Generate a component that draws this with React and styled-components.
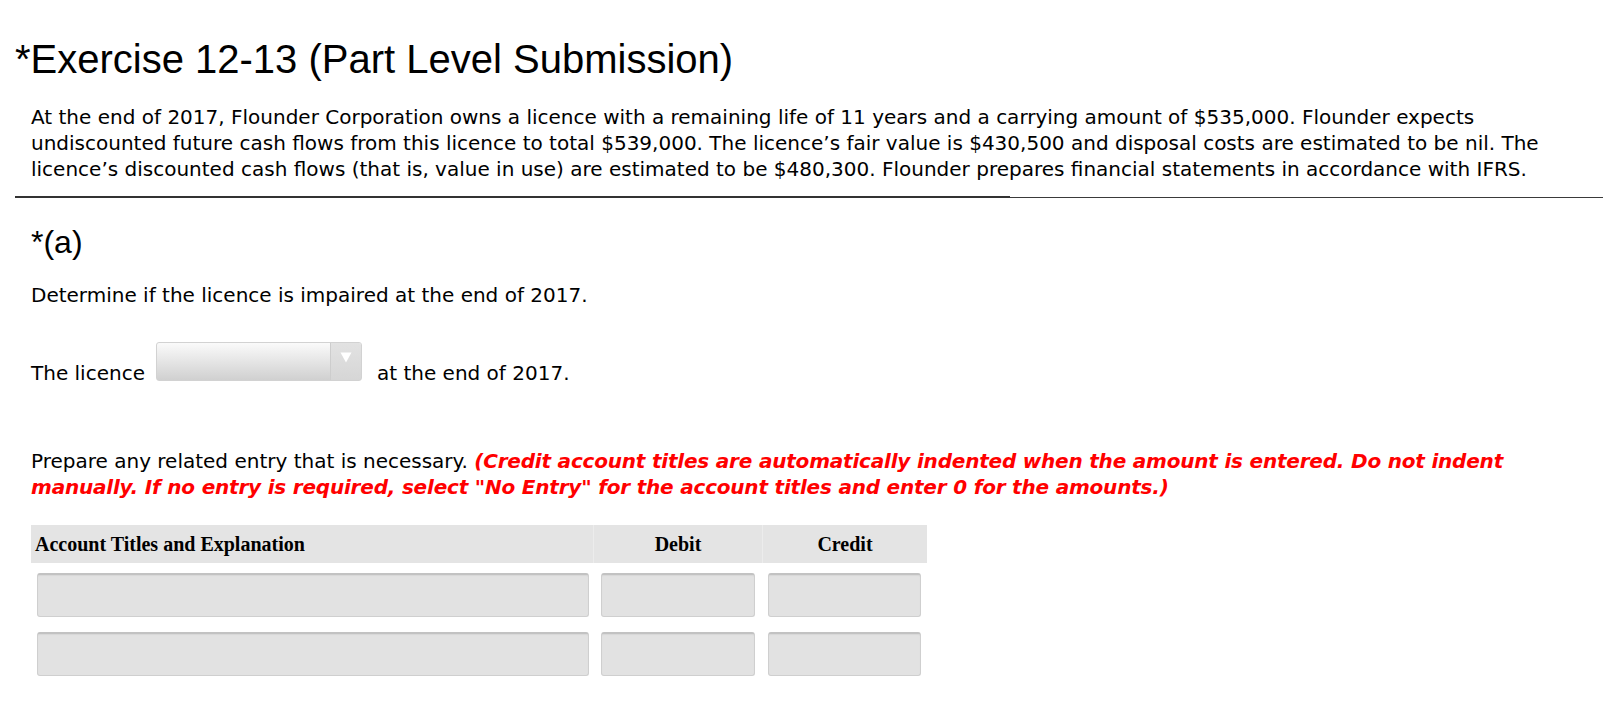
import React from "react";
import styled, { createGlobalStyle } from "styled-components";

const GlobalStyle = createGlobalStyle`
  body {
    margin: 0;
    background: #fff;
    color: #000;
    font-family: "DejaVu Sans", Verdana, sans-serif;
  }
`;

const Page = styled.div`
  width: 1620px;
  padding: 36px 0 30px 0;
`;

const Title = styled.h1`
  margin: 0 0 0 15px;
  font-family: "Liberation Sans", Arial, sans-serif;
  font-weight: normal;
  font-size: 40px;
  line-height: 46px;
`;

const Body = styled.div`
  padding-left: 31px;
`;

const Text = styled.p`
  margin: ${(p) => p.$margin || "0"};
  font-size: 20px;
  line-height: 26px;
`;

const Rule = styled.div`
  position: relative;
  margin: 15px 17px 0 15px;
  height: 1px;
  background: #3a3a3a;
  &::before {
    content: "";
    position: absolute;
    left: 0;
    top: -1px;
    width: 995px;
    height: 2px;
    background: #333;
  }
`;

const Part = styled.h2`
  margin: 25px 0 0 31px;
  font-family: "Liberation Sans", Arial, sans-serif;
  font-weight: normal;
  font-size: 32px;
  line-height: 38px;
`;

const Row = styled.div`
  display: flex;
  align-items: flex-end;
  gap: 11px;
  font-size: 20px;
  line-height: 26px;
  margin-top: 34px;
`;

const Select = styled.div`
  width: 206px;
  height: 39px;
  margin: 0 4px 5px 0;
  display: flex;
  box-sizing: border-box;
  border: 1px solid #d2d2d2;
  border-radius: 3px;
  background: linear-gradient(#fafafa, #d0d0d0);
  overflow: hidden;
`;

const SelectBody = styled.div`
  flex: 1;
`;

const SelectArrow = styled.div`
  width: 31px;
  border-left: 1px solid #cdcdcd;
  background: linear-gradient(#e2e2e2, #d6d6d6);
  display: flex;
  justify-content: center;
  padding-top: 9px;
  box-sizing: border-box;
`;

const Red = styled.span`
  color: #ff0000;
  font-weight: bold;
  font-style: italic;
  letter-spacing: -0.2px;
`;

const Table = styled.div`
  margin-top: 25px;
  width: 896px;
`;

const Grid = styled.div`
  display: grid;
  grid-template-columns: 562px 169px 165px;
`;

const HeadCell = styled.div`
  background: #e4e4e4;
  height: 38px;
  box-sizing: border-box;
  padding: 0 4px;
  display: flex;
  align-items: center;
  justify-content: ${(p) => (p.$first ? "flex-start" : "center")};
  border-left: ${(p) => (p.$first ? "none" : "1px solid #ececec")};
  font-family: "Liberation Serif", "Times New Roman", serif;
  font-weight: bold;
  font-size: 20px;
`;

const Cell = styled.div`
  padding: ${(p) => p.$pad};
  margin-top: ${(p) => p.$top}px;
`;

const Input = styled.div`
  height: 44px;
  box-sizing: border-box;
  background: #e2e2e2;
  border: 1px solid #cfcfcf;
  border-top: 2px solid #c2c2c2;
  border-radius: 3px;
  box-shadow: inset 0 1px 1px rgba(0, 0, 0, 0.05);
`;

const rows = [10, 15];

export default function App() {
  return (
    <Page>
      <GlobalStyle />
      <Title>*Exercise 12-13 (Part Level Submission)</Title>
      <Body>
        <Text $margin="22px 0 0 0">
          At the end of 2017, Flounder Corporation owns a licence with a
          remaining life of 11 years and a carrying amount of $535,000.
          Flounder expects
          <br />
          undiscounted future cash flows from this licence to total $539,000.
          The licence’s fair value is $430,500 and disposal costs are
          estimated to be nil. The
          <br />
          licence’s discounted cash flows (that is, value in use) are
          estimated to be $480,300. Flounder prepares financial statements in
          accordance with IFRS.
        </Text>
      </Body>
      <Rule />
      <Part>*(a)</Part>
      <Body>
        <Text $margin="21px 0 0 0">
          Determine if the licence is impaired at the end of 2017.
        </Text>
        <Row>
          <span>The licence</span>
          <Select>
            <SelectBody />
            <SelectArrow>
              <svg width="12" height="11" viewBox="0 0 12 11">
                <path d="M0.5 0.5 L11.5 0.5 L6 10.5 Z" fill="#fff" />
              </svg>
            </SelectArrow>
          </Select>
          <span>at the end of 2017.</span>
        </Row>
        <Text $margin="62px 0 0 0">
          Prepare any related entry that is necessary.{" "}
          <Red>
            (Credit account titles are automatically indented when the amount
            is entered. Do not indent
            <br />
            manually. If no entry is required, select "No Entry" for the
            account titles and enter 0 for the amounts.)
          </Red>
        </Text>
        <Table>
          <Grid>
            <HeadCell $first>Account Titles and Explanation</HeadCell>
            <HeadCell>Debit</HeadCell>
            <HeadCell>Credit</HeadCell>
          </Grid>
          {rows.map((top, i) => (
            <Grid key={i}>
              <Cell $pad="0 4px 0 6px" $top={top}>
                <Input />
              </Cell>
              <Cell $pad="0 7px 0 8px" $top={top}>
                <Input />
              </Cell>
              <Cell $pad="0 6px 0 6px" $top={top}>
                <Input />
              </Cell>
            </Grid>
          ))}
        </Table>
      </Body>
    </Page>
  );
}
